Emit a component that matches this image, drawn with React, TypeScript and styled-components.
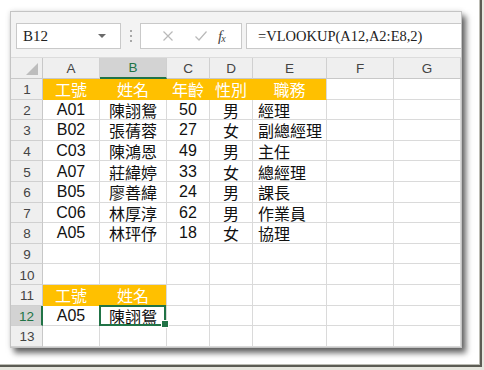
import React from 'react';
import styled, { createGlobalStyle, css } from 'styled-components';

const GlobalStyle = createGlobalStyle`
  html, body {
    margin: 0;
    padding: 0;
    background: #ffffff;
  }
  * {
    box-sizing: border-box;
  }
`;

const GREEN = '#217346';
const ORANGE = '#ffc000';
const GRID = '#dadada';

const columns = [
  { key: 'A', width: 57 },
  { key: 'B', width: 67 },
  { key: 'C', width: 43 },
  { key: 'D', width: 43 },
  { key: 'E', width: 74 },
  { key: 'F', width: 67 },
  { key: 'G', width: 67 },
];

type Align = 'center' | 'left';
const align: Align[] = ['center', 'center', 'center', 'center', 'left', 'left', 'left'];

const rows: string[][] = [
  ['工號', '姓名', '年齡', '性別', '職務'],
  ['A01', '陳詡鴛', '50', '男', '經理'],
  ['B02', '張蒨蓉', '27', '女', '副總經理'],
  ['C03', '陳鴻恩', '49', '男', '主任'],
  ['A07', '莊緯婷', '33', '女', '總經理'],
  ['B05', '廖善緯', '24', '男', '課長'],
  ['C06', '林厚淳', '62', '男', '作業員'],
  ['A05', '林玶伃', '18', '女', '協理'],
  [],
  [],
  ['工號', '姓名'],
  ['A05', '陳詡鴛'],
  [],
];

// orange header fill: row number -> last filled column index
const filled: Record<number, number> = { 1: 4, 11: 1 };

export default function App() {
  return (
    <Page>
      <GlobalStyle />
      <Frame>
        <Window>
          <Toolbar>
            <NameBox>
              B12
              <DropArrow />
            </NameBox>
            <Grip>
              <i />
              <i />
              <i />
            </Grip>
            <FxBox>
              <ToolIcon>
                <svg width="12" height="12" viewBox="0 0 12 12">
                  <path d="M1.5 1.5 L10.5 10.5 M10.5 1.5 L1.5 10.5" stroke="#b9b9b9" strokeWidth="1.2" fill="none" />
                </svg>
              </ToolIcon>
              <ToolIcon>
                <svg width="14" height="12" viewBox="0 0 14 12">
                  <path d="M1.5 6.5 L5 10 L12.5 1.5" stroke="#b9b9b9" strokeWidth="1.2" fill="none" />
                </svg>
              </ToolIcon>
              <FxLabel>
                f<sub>x</sub>
              </FxLabel>
            </FxBox>
            <FormulaBox>=VLOOKUP(A12,A2:E8,2)</FormulaBox>
          </Toolbar>
          <Sheet>
            <Corner>
              <svg width="14" height="14" viewBox="0 0 14 14">
                <path d="M13 1 L13 13 L1 13 Z" fill="#bdbdbd" />
              </svg>
            </Corner>
            {columns.map((c) => (
              <ColHead key={c.key} $selected={c.key === 'B'}>
                {c.key}
              </ColHead>
            ))}
            {rows.map((r, ri) => {
              const rowNo = ri + 1;
              return (
                <React.Fragment key={rowNo}>
                  <RowHead $selected={rowNo === 12}>{rowNo}</RowHead>
                  {columns.map((c, ci) => {
                    const fill = filled[rowNo] !== undefined && ci <= filled[rowNo];
                    const nextFill = filled[rowNo] !== undefined && ci + 1 <= filled[rowNo];
                    return (
                      <Cell
                        key={c.key}
                        $align={fill ? 'center' : align[ci]}
                        $fill={fill}
                        $joinRight={nextFill}
                        $active={rowNo === 12 && c.key === 'B'}
                      >
                        {r[ci] ?? ''}
                      </Cell>
                    );
                  })}
                </React.Fragment>
              );
            })}
          </Sheet>
        </Window>
      </Frame>
    </Page>
  );
}

const Page = styled.div`
  width: 484px;
  height: 370px;
  background: #e6e6de;
  overflow: hidden;
`;

const Frame = styled.div`
  width: 482px;
  height: 367px;
  padding: 11px 0 0 10px;
  background: #ffffff;
  border-right: 2px solid #5c5c54;
  border-bottom: 2px solid #5c5c54;
  box-shadow: inset -1px -1px 0 #bdbdb5;
`;

const Window = styled.div`
  width: 452px;
  border: 1px solid #c4c4c4;
  background: #ffffff;
  box-shadow: 4px 5px 6px rgba(0, 0, 0, 0.6), 0 0 5px rgba(0, 0, 0, 0.12);
`;

const Toolbar = styled.div`
  height: 46px;
  display: flex;
  align-items: flex-start;
  padding: 11px 0 0 5px;
  background: #f3f3f3;
  border-bottom: 1px solid #dcdcdc;
`;

const boxBase = css`
  height: 26px;
  background: #ffffff;
  border: 1px solid #c9c9c9;
  display: flex;
  align-items: center;
`;

const NameBox = styled.div`
  ${boxBase};
  width: 105px;
  padding-left: 6px;
  font-family: 'Liberation Serif', serif;
  font-size: 15px;
  color: #222;
`;

const DropArrow = styled.span`
  margin-left: auto;
  margin-right: 14px;
  width: 0;
  height: 0;
  border-left: 4px solid transparent;
  border-right: 4px solid transparent;
  border-top: 4px solid #6a6a6a;
`;

const Grip = styled.div`
  width: 19px;
  height: 26px;
  display: flex;
  flex-direction: column;
  align-items: center;
  justify-content: center;
  gap: 3px;

  i {
    display: block;
    width: 2px;
    height: 2px;
    background: #a8a8a8;
  }
`;

const FxBox = styled.div`
  ${boxBase};
  width: 102px;
  padding-left: 10px;
`;

const ToolIcon = styled.span`
  width: 33px;
  display: flex;
  justify-content: center;
`;

const FxLabel = styled.span`
  margin-left: 1px;
  font-family: 'Liberation Serif', serif;
  font-style: italic;
  font-size: 15px;
  color: #444;

  sub {
    font-size: 10px;
    vertical-align: -1px;
    margin-left: -1px;
  }
`;

const FormulaBox = styled.div`
  ${boxBase};
  flex: 1;
  margin-left: 4px;
  border-right: none;
  padding-left: 11px;
  font-family: 'Liberation Serif', serif;
  font-size: 14.5px;
  color: #222;
`;

const Sheet = styled.div`
  display: grid;
  grid-template-columns: 32px ${columns.map((c) => `${c.width}px`).join(' ')};
  grid-template-rows: 21px repeat(13, 20.6px);
  font-family: 'Liberation Sans', 'Noto Sans CJK TC', sans-serif;
`;

const headBase = css`
  display: flex;
  align-items: center;
  justify-content: center;
  background: #efefef;
  color: #444;
  font-size: 13.5px;
`;

const Corner = styled.div`
  ${headBase};
  justify-content: flex-end;
  align-items: flex-end;
  padding: 0 3px 2px 0;
  border-right: 1px solid #c8c8c8;
  border-bottom: 1px solid #c8c8c8;
`;

const ColHead = styled.div<{ $selected?: boolean }>`
  ${headBase};
  border-right: 1px solid #d0d0d0;
  border-bottom: ${(p) => (p.$selected ? `2px solid ${GREEN}` : '1px solid #c8c8c8')};
  background: ${(p) => (p.$selected ? '#d3d3d3' : '#efefef')};
  color: ${(p) => (p.$selected ? GREEN : '#444')};
`;

const RowHead = styled.div<{ $selected?: boolean }>`
  ${headBase};
  padding: 2px 0 0 1px;
  border-bottom: 1px solid #d0d0d0;
  border-right: ${(p) => (p.$selected ? `2px solid ${GREEN}` : '1px solid #c8c8c8')};
  background: ${(p) => (p.$selected ? '#d3d3d3' : '#efefef')};
  color: ${(p) => (p.$selected ? GREEN : '#444')};
`;

const Cell = styled.div<{ $align: Align; $fill?: boolean; $joinRight?: boolean; $active?: boolean }>`
  position: relative;
  display: flex;
  align-items: center;
  justify-content: ${(p) => (p.$align === 'center' ? 'center' : 'flex-start')};
  padding: 1px 0 0 ${(p) => (p.$align === 'left' ? '5px' : '0')};
  font-size: 16px;
  white-space: nowrap;
  color: ${(p) => (p.$fill ? '#ffffff' : '#111')};
  background: ${(p) => (p.$fill ? ORANGE : '#ffffff')};
  border-right: 1px solid ${(p) => (p.$joinRight ? ORANGE : GRID)};
  border-bottom: 1px solid ${(p) => (p.$fill ? ORANGE : GRID)};

  ${(p) =>
    p.$active &&
    css`
      &::after {
        content: '';
        position: absolute;
        inset: -1px 0 -1px -1px;
        border: 2px solid ${GREEN};
      }
      &::before {
        content: '';
        position: absolute;
        right: -3px;
        bottom: -3px;
        width: 6px;
        height: 6px;
        background: ${GREEN};
        border: 1px solid #ffffff;
        z-index: 1;
      }
    `}
`;
